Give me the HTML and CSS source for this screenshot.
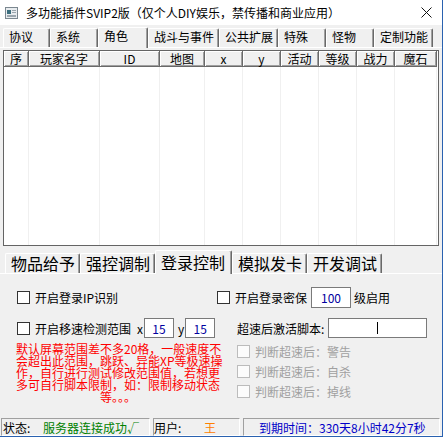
FILE: index.html
```html
<!DOCTYPE html>
<html lang="zh-CN">
<head>
    <meta charset="UTF-8">
    <title>多功能插件SVIP2版</title>
    <link rel="stylesheet" href="styles.css">
</head>
<body>
    <div class="window">
        <div class="titlebar">
            <svg class="app-icon" viewBox="0 0 13 12">
                <rect x="0.5" y="0.5" width="12" height="11" fill="#e8ecef" stroke="#7b8790"/>
                <rect x="2" y="3" width="4" height="4" fill="#3b6e7e"/>
                <rect x="7" y="3" width="4" height="1" fill="#9aa5ad"/>
                <rect x="7" y="5" width="4" height="1" fill="#9aa5ad"/>
                <rect x="2" y="8" width="9" height="2" fill="#9aa5ad"/>
            </svg>
            <span class="title">多功能插件SVIP2版（仅个人DIY娱乐，禁传播和商业应用）</span>
            <svg class="close" viewBox="0 0 11 11">
                <path d="M0.5 0.5L10.5 10.5M10.5 0.5L0.5 10.5" stroke="#111" stroke-width="1"/>
            </svg>
        </div>

        <!-- top tab control -->
        <div class="main-tabs">
            <div class="tab">协议</div>
            <div class="tab">系统</div>
            <div class="tab active">角色</div>
            <div class="tab">战斗与事件</div>
            <div class="tab">公共扩展</div>
            <div class="tab">特殊</div>
            <div class="tab">怪物</div>
            <div class="tab">定制功能</div>
        </div>
        <div class="main-page">
            <div class="list">
                <div class="list-head">
                    <div class="hcell">序</div>
                    <div class="hcell">玩家名字</div>
                    <div class="hcell">ID</div>
                    <div class="hcell">地图</div>
                    <div class="hcell">x</div>
                    <div class="hcell">y</div>
                    <div class="hcell">活动</div>
                    <div class="hcell">等级</div>
                    <div class="hcell">战力</div>
                    <div class="hcell">魔石</div>
                </div>
                <div class="list-body">
                    <div class="col"></div>
                    <div class="col"></div>
                    <div class="col"></div>
                    <div class="col"></div>
                    <div class="col"></div>
                    <div class="col"></div>
                    <div class="col"></div>
                    <div class="col"></div>
                    <div class="col"></div>
                    <div class="col"></div>
                </div>
            </div>
        </div>

        <!-- lower tab control -->
        <div class="sub-tabs">
            <div class="tab">物品给予</div>
            <div class="tab">强控调制</div>
            <div class="tab active">登录控制</div>
            <div class="tab">模拟发卡</div>
            <div class="tab">开发调试</div>
        </div>
        <div class="sub-page">
            <div class="row">
                <div class="col-left">
                    <span class="check"></span>
                    <span class="label">开启登录IP识别</span>
                </div>
                <div class="col-right">
                    <span class="check"></span>
                    <span class="label">开启登录密保</span>
                    <span class="input level">100</span>
                    <span class="after">级启用</span>
                </div>
            </div>

            <div class="row row-range">
                <div class="col-left">
                    <span class="check"></span>
                    <span class="label">开启移速检测范围</span>
                    <span class="axis">x</span>
                    <span class="input small">15</span>
                    <span class="axis">y</span>
                    <span class="input small">15</span>
                </div>
                <div class="col-right indent">
                    <span>超速后激活脚本:</span>
                    <span class="input script"><span class="caret"></span></span>
                </div>
            </div>

            <div class="row row-notes">
                <div class="notice">
                    <div class="line">默认屏幕范围差不多20格，一般速度不</div>
                    <div class="line">会超出此范围，跳跃、异能XP等极速操</div>
                    <div class="line">作，自行进行测试修改范围值，若想更</div>
                    <div class="line">多可自行脚本限制，如：限制移动状态</div>
                    <div class="line last">等。。。</div>
                </div>
                <div class="options">
                    <div class="option"><span class="check disabled"></span><span class="label">判断超速后：警告</span></div>
                    <div class="option"><span class="check disabled"></span><span class="label">判断超速后：自杀</span></div>
                    <div class="option"><span class="check disabled"></span><span class="label">判断超速后：掉线</span></div>
                </div>
            </div>
        </div>

        <div class="statusbar">
            <div class="panel panel-state">
                <span class="key">状态:</span>
                <span class="ok">服务器连接成功√</span>
            </div>
            <div class="panel panel-user">
                <span class="key wide">用户:</span>
                <span class="user">王</span>
            </div>
            <div class="panel panel-expire">
                <span class="expire">到期时间：330天8小时42分7秒</span>
            </div>
        </div>
    </div>
</body>
</html>
```

FILE: styles.css
```css
* {
    box-sizing: border-box;
}

body {
    margin: 0;
    background: #fff;
    font-family: "Noto Sans CJK SC", "Noto Sans", sans-serif;
    font-size: 12px;
    color: #000;
}

.window {
    width: 443px;
    height: 437px;
    background: #f0f0f0;
    border-right: 1px solid #2a62b0;
    border-bottom: 1px solid #2a62b0;
    display: flex;
    flex-direction: column;
    overflow: hidden;
}

/* title bar */
.titlebar {
    height: 25px;
    flex: none;
    background: #fff;
    display: flex;
    align-items: center;
    padding-left: 5px;
}

.app-icon {
    width: 13px;
    height: 12px;
    margin-right: 8px;
}

.title {
    flex: 1;
    line-height: 25px;
    white-space: nowrap;
}

.close {
    width: 11px;
    height: 11px;
    margin-right: 10px;
}

/* tabs, classic look */
.tab {
    border-top: 1px solid #fff;
    border-left: 1px solid #fff;
    border-right: 1px solid #696969;
    box-shadow: inset -1px 0 #a0a0a0;
    border-radius: 2px 2px 0 0;
    white-space: nowrap;
    background: #f0f0f0;
}

.tab.active {
    position: relative;
    z-index: 1;
    margin-bottom: -1px;
}

.main-tabs {
    height: 22px;
    flex: none;
    display: flex;
    align-items: flex-end;
    padding-left: 3px;
}

.main-tabs .tab {
    height: 19px;
    line-height: 16px;
    min-width: 48px;
    padding: 0 4px 0 5px;
}

.main-tabs .tab:first-child {
    min-width: 47px;
}

.main-tabs .tab.active {
    height: 21px;
    min-width: 50px;
}

.main-page {
    height: 200px;
    flex: none;
    border-top: 1px solid #fff;
    padding: 2px 3px 1px 3px;
}

/* player list */
.list {
    height: 100%;
    background: #fff;
    border: 1px solid #646464;
    display: flex;
    flex-direction: column;
}

.list-head,
.list-body {
    display: grid;
    grid-template-columns: 25px 71px 60px 45px 38px 38px 38px 38px 38px 42px;
}

.list-head {
    height: 16px;
}

.hcell {
    background: #f0f0f0;
    border-right: 1px solid #696969;
    border-bottom: 1px solid #696969;
    box-shadow: inset 1px 1px 0 #fff, inset -1px -1px 0 #a0a0a0;
    text-align: center;
    line-height: 15px;
}

.list-body {
    flex: 1;
}

.list-body .col {
    border-right: 1px solid #f0f0f0;
}

/* lower tabs */
.sub-tabs {
    height: 26px;
    flex: none;
    display: flex;
    align-items: flex-end;
    padding-left: 5px;
}

.sub-tabs .tab {
    height: 20px;
    line-height: 18px;
    font-size: 16px;
    padding: 0 4px 0 5px;
}

.sub-tabs .tab.active {
    height: 24px;
    padding-top: 2px;
    min-width: 77px;
}

.sub-page {
    height: 145px;
    flex: none;
    border-top: 1px solid #fff;
    padding: 13px 0 0 16px;
}

.row {
    display: flex;
    align-items: center;
    height: 21px;
}

.col-left {
    width: 201px;
    display: flex;
    align-items: center;
    white-space: nowrap;
}

.col-right {
    display: flex;
    align-items: center;
    white-space: nowrap;
}

.col-right.indent {
    padding-left: 20px;
}

.check {
    width: 13px;
    height: 13px;
    flex: none;
    background: #fff;
    border: 1px solid #333;
}

.col-left > .check:first-child {
    margin-left: 1px;
}

.check.disabled {
    border-color: #bcbcbc;
    background: #fcfcfc;
}

.label {
    margin-left: 5px;
}

.input {
    display: inline-flex;
    align-items: center;
    justify-content: center;
    background: #fff;
    border: 1px solid #7a7a7a;
    color: #0000a0;
    height: 20px;
}

.level {
    width: 40px;
    height: 21px;
    margin-left: 4px;
}

.after {
    margin-left: 3px;
}

.axis {
    margin-left: 6px;
    margin-right: 1px;
}

.axis + .input + .axis {
    margin-left: 4px;
}

.small {
    width: 30px;
}

.row-range {
    margin-top: 10px;
    height: 20px;
}

.script {
    width: 99px;
    margin-left: 4px;
    justify-content: flex-start;
    padding-left: 48px;
}

.caret {
    width: 1px;
    height: 12px;
    background: #000;
}

.row-notes {
    margin-top: 3px;
    height: auto;
    align-items: flex-start;
}

.notice {
    width: 204px;
    padding-top: 2px;
    color: #f00;
    line-height: 12px;
}

.notice .line {
    white-space: nowrap;
    text-align: justify;
    text-align-last: justify;
}

.notice .line.last {
    text-align: center;
    text-align-last: center;
}

.options {
    padding-left: 17px;
}

.option {
    height: 20px;
    display: flex;
    align-items: center;
    color: #a0a0a0;
}

/* status bar */
.statusbar {
    height: 18px;
    flex: none;
    display: flex;
    gap: 3px;
    padding-left: 1px;
}

.panel {
    display: flex;
    align-items: center;
    border-top: 1px solid #a0a0a0;
    border-left: 1px solid #a0a0a0;
    border-bottom: 1px solid #fff;
    border-right: 1px solid #fff;
    white-space: nowrap;
}

.panel-state {
    width: 149px;
    padding-left: 1px;
}

.panel-user {
    width: 87px;
}

.panel-expire {
    width: 197px;
    padding-left: 15px;
}

.key {
    width: 40px;
}

.key.wide {
    width: 50px;
}

.ok {
    color: #008000;
}

.user {
    color: #ff8000;
}

.expire {
    color: #0000c8;
}
```
